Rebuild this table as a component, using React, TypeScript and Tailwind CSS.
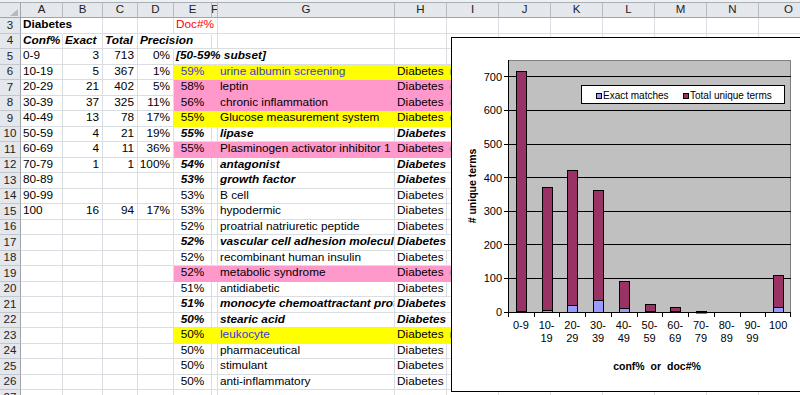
import React from 'react';

type Cell = { t: string; a?: 'l' | 'r' | 'c'; s?: 'b' | 'bi'; c?: string; ov?: boolean };
type Row = { n: number; fill?: 'y' | 'p'; cells: Record<number, Cell> };

const COLS = ['A', 'B', 'C', 'D', 'E', 'F', 'G', 'H', 'I', 'J', 'K', 'L', 'M', 'N', 'O'];
const WIDTHS = [
  'w-[42px]', 'w-[40px]', 'w-[35px]', 'w-[36px]', 'w-[38px]', 'w-[6px]', 'w-[177px]',
  'w-[52px]', 'w-[52px]', 'w-[52px]', 'w-[52px]', 'w-[52px]', 'w-[52px]', 'w-[52px]', 'w-[60px]',
];

const BLUE = 'text-[#3b3bd6]';
const GREEN = 'text-[#86b95c]';
const GREY = 'text-[#9a9a9a]';

// A-D block: range, exact, total, precision
const nums = (a: string, b = '', c = '', d = ''): Record<number, Cell> => ({
  0: { t: a },
  1: { t: b, a: 'r' },
  2: { t: c, a: 'r' },
  3: { t: d, a: 'r' },
});

// E, G, H (+ the sliver of I that peeks out from under the chart)
const term = (
  pct: string,
  name: string,
  o: { bi?: boolean; pc?: string; nc?: string; tail?: [string, string] } = {}
): Record<number, Cell> => {
  const s = o.bi ? 'bi' : undefined;
  const cells: Record<number, Cell> = {
    4: { t: pct, a: 'c', s, c: o.pc },
    6: { t: name, s, c: o.nc },
    7: { t: 'Diabetes', s, ov: o.bi },
  };
  if (o.tail) cells[8] = { t: o.tail[0], c: o.tail[1] };
  return cells;
};

const ROWS: Row[] = [
  {
    n: 3,
    cells: { 0: { t: 'Diabetes', s: 'b', ov: true }, 4: { t: 'Doc#%', c: 'text-[#ff0000]', ov: true } },
  },
  {
    n: 4,
    cells: {
      0: { t: 'Conf%', s: 'bi' },
      1: { t: 'Exact', s: 'bi' },
      2: { t: 'Total', s: 'bi' },
      3: { t: 'Precision', s: 'bi', ov: true },
    },
  },
  {
    n: 5,
    cells: { ...nums('0-9', '3', '713', '0%'), 4: { t: '[50-59% subset]', s: 'bi', ov: true }, 5: { t: '', ov: true } },
  },
  { n: 6, fill: 'y', cells: { ...nums('10-19', '5', '367', '1%'), ...term('59%', 'urine albumin screening', { pc: BLUE, nc: BLUE, tail: ['m', GREEN] }) } },
  { n: 7, fill: 'p', cells: { ...nums('20-29', '21', '402', '5%'), ...term('58%', 'leptin', { tail: ['e', GREY] }) } },
  { n: 8, fill: 'p', cells: { ...nums('30-39', '37', '325', '11%'), ...term('56%', 'chronic inflammation', { tail: ['e', GREY] }) } },
  { n: 9, fill: 'y', cells: { ...nums('40-49', '13', '78', '17%'), ...term('55%', 'Glucose measurement system', { tail: ['c', GREEN] }) } },
  { n: 10, cells: { ...nums('50-59', '4', '21', '19%'), ...term('55%', 'lipase', { bi: true }) } },
  { n: 11, fill: 'p', cells: { ...nums('60-69', '4', '11', '36%'), ...term('55%', 'Plasminogen activator inhibitor 1', { tail: ['e', GREY] }) } },
  { n: 12, cells: { ...nums('70-79', '1', '1', '100%'), ...term('54%', 'antagonist', { bi: true }) } },
  { n: 13, cells: { ...nums('80-89'), ...term('53%', 'growth factor', { bi: true }) } },
  { n: 14, cells: { ...nums('90-99'), ...term('53%', 'B cell') } },
  { n: 15, cells: { ...nums('100', '16', '94', '17%'), ...term('53%', 'hypodermic') } },
  { n: 16, cells: term('52%', 'proatrial natriuretic peptide') },
  { n: 17, cells: term('52%', 'vascular cell adhesion molecule-1', { bi: true }) },
  { n: 18, cells: term('52%', 'recombinant human insulin') },
  { n: 19, fill: 'p', cells: term('52%', 'metabolic syndrome', { tail: ['e', GREY] }) },
  { n: 20, cells: term('51%', 'antidiabetic') },
  { n: 21, cells: term('51%', 'monocyte chemoattractant protein-1', { bi: true }) },
  { n: 22, cells: term('50%', 'stearic acid', { bi: true }) },
  { n: 23, fill: 'y', cells: term('50%', 'leukocyte', { nc: BLUE, tail: ['m', GREEN] }) },
  { n: 24, cells: term('50%', 'pharmaceutical') },
  { n: 25, cells: term('50%', 'stimulant') },
  { n: 26, cells: term('50%', 'anti-inflammatory') },
  { n: 27, cells: {} },
];

function SheetCell({ w, cell, fill }: { w: string; cell?: Cell; fill?: 'y' | 'p' }) {
  const base =
    fill === 'y'
      ? 'bg-[#ffff00] border-[#ffff00]'
      : fill === 'p'
      ? 'bg-[#ff99cc] border-[#ff99cc]'
      : 'border-[#dadde1]';
  const al =
    cell?.a === 'r' ? 'justify-end pr-[3px]' : cell?.a === 'c' ? 'justify-center' : 'justify-start pl-[2px]';
  const st = cell?.s === 'bi' ? 'font-bold italic' : cell?.s === 'b' ? 'font-bold' : '';
  const ov = cell?.ov ? 'overflow-visible border-r-transparent relative z-10' : 'overflow-hidden';
  return (
    <div className={`${w} shrink-0 h-full flex items-center whitespace-nowrap border-r border-b ${base} ${al} ${st} ${ov} ${cell?.c ?? ''}`}>
      {cell?.t}
    </div>
  );
}

function Chart() {
  const cats = [['0-9'], ['10-', '19'], ['20-', '29'], ['30-', '39'], ['40-', '49'], ['50-', '59'], ['60-', '69'], ['70-', '79'], ['80-', '89'], ['90-', '99'], ['100']];
  const exact = [3, 5, 21, 37, 13, 4, 4, 1, 0, 0, 16];
  const total = [713, 367, 402, 325, 78, 21, 11, 1, 0, 0, 94];
  const x0 = 508;
  const x1 = 791;
  const y0 = 312;
  const step = (x1 - x0) / 11;
  const y = (v: number) => y0 - v * 0.336;
  const grid = [100, 200, 300, 400, 500, 600, 700];

  return (
    <div className="absolute left-[451px] top-[37px] z-20 w-[360px] h-[355px] border border-black bg-white">
      <svg width={358} height={353} viewBox="452 38 358 353" className="block">
        <rect x={x0} y={60} width={x1 - x0} height={y0 - 60} fill="#c0c0c0" />
        <line x1={x0} x2={x1} y1={60.5} y2={60.5} stroke="#808080" />
        <line x1={x1 - 0.5} x2={x1 - 0.5} y1={60} y2={y0} stroke="#808080" />
        {grid.map((v) => {
          const gy = Math.floor(y(v)) + 0.5;
          return <line key={v} x1={x0} x2={x1} y1={gy} y2={gy} stroke="#000" />;
        })}

        {cats.map((_, i) => {
          const cx = x0 + (i + 0.5) * step;
          const bx = Math.round(cx - 5) + 0.5;
          const e = exact[i];
          const t = total[i];
          if (e + t === 0) return null;
          const ey = Math.round(y(e));
          const ty = Math.round(y(e + t));
          return (
            <g key={i} stroke="#000" strokeWidth={1}>
              <rect x={bx} y={ty + 0.5} width={10} height={Math.max(ey - ty, 0.5)} fill="#993366" />
              {e > 0 && <rect x={bx} y={ey + 0.5} width={10} height={Math.max(y0 - ey, 0.5)} fill="#9999ff" />}
            </g>
          );
        })}

        {/* axes */}
        <line x1={x0 + 0.5} x2={x0 + 0.5} y1={60} y2={y0 + 1} stroke="#000" />
        <line x1={x0} x2={x1} y1={y0 + 0.5} y2={y0 + 0.5} stroke="#000" />
        {[0, ...grid].map((v) => {
          const gy = v === 0 ? y0 + 0.5 : Math.floor(y(v)) + 0.5;
          return <line key={v} x1={504} x2={x0} y1={gy} y2={gy} stroke="#000" />;
        })}
        {cats.map((_, i) => {
          const tx = Math.round(x0 + i * step) + 0.5;
          return <line key={i} x1={tx} x2={tx} y1={y0} y2={y0 + 5} stroke="#000" />;
        })}
        <line x1={x1 - 0.5} x2={x1 - 0.5} y1={y0} y2={y0 + 5} stroke="#000" />

        {/* labels */}
        <g fontSize={11} fill="#000">
          {[0, ...grid].map((v) => (
            <text key={v} x={502} y={y(v) + 4} textAnchor="end">
              {v}
            </text>
          ))}
          {cats.map((c, i) => {
            const cx = x0 + (i + 0.5) * step;
            return (
              <text key={i} x={cx} textAnchor="middle">
                <tspan x={cx} y={328.5}>{c[0]}</tspan>
                {c[1] && <tspan x={cx} y={341.5}>{c[1]}</tspan>}
              </text>
            );
          })}
        </g>
        <text x={657} y={369.5} fontSize={10.5} fontWeight="bold" textAnchor="middle" wordSpacing={3}>
          conf% or doc#%
        </text>
        <text transform="translate(476,186) rotate(-90)" fontSize={10.5} fontWeight="bold" textAnchor="middle">
          # unique terms
        </text>

        {/* legend */}
        <rect x={581.5} y={85.5} width={203} height={18} fill="#fff" stroke="#000" />
        <rect x={596.5} y={93.5} width={5} height={5} fill="#9999ff" stroke="#000" />
        <text x={603} y={98.5} fontSize={10}>Exact matches</text>
        <rect x={683.5} y={93.5} width={5} height={5} fill="#993366" stroke="#000" />
        <text x={690} y={98.5} fontSize={10}>Total unique terms</text>
      </svg>
    </div>
  );
}

export default function App() {
  return (
    <div className="relative w-[800px] h-[395px] overflow-hidden bg-white font-['Liberation_Sans',Arial,sans-serif] text-[11.8px] leading-none text-black">
      {/* strip left over from the formula bar */}
      <div className="h-[3px] bg-[#eef0f2] border-b border-[#a9afb7]" />

      {/* column headers */}
      <div className="flex h-[15px]">
        <div className="w-[21px] shrink-0 relative bg-[#e4e7eb] border-r border-b border-[#9ea4ab]">
          <svg width="8" height="7" viewBox="0 0 8 7" className="absolute right-[2px] bottom-[1px]">
            <polygon points="8,0 8,7 0,7" fill="#b4b9c0" />
          </svg>
        </div>
        {COLS.map((c, i) => (
          <div
            key={c}
            className={`${WIDTHS[i]} shrink-0 flex items-center justify-center bg-[#e4e7eb] border-r border-b border-[#b7bcc2] border-b-[#9ea4ab] text-[11.5px] text-[#222] overflow-hidden`}
          >
            {c}
          </div>
        ))}
      </div>

      {/* rows */}
      {ROWS.map((r) => (
        <div key={r.n} className="flex h-[15.5px]">
          <div className="w-[21px] shrink-0 flex items-center justify-center bg-[#e4e7eb] border-r border-b border-[#c3c8ce] border-r-[#9ea4ab] text-[11.5px] text-[#222]">
            {r.n}
          </div>
          {WIDTHS.map((w, i) => (
            <SheetCell key={i} w={w} cell={r.cells[i]} fill={i >= 4 && i <= 8 ? r.fill : undefined} />
          ))}
        </div>
      ))}

      <Chart />
    </div>
  );
}
